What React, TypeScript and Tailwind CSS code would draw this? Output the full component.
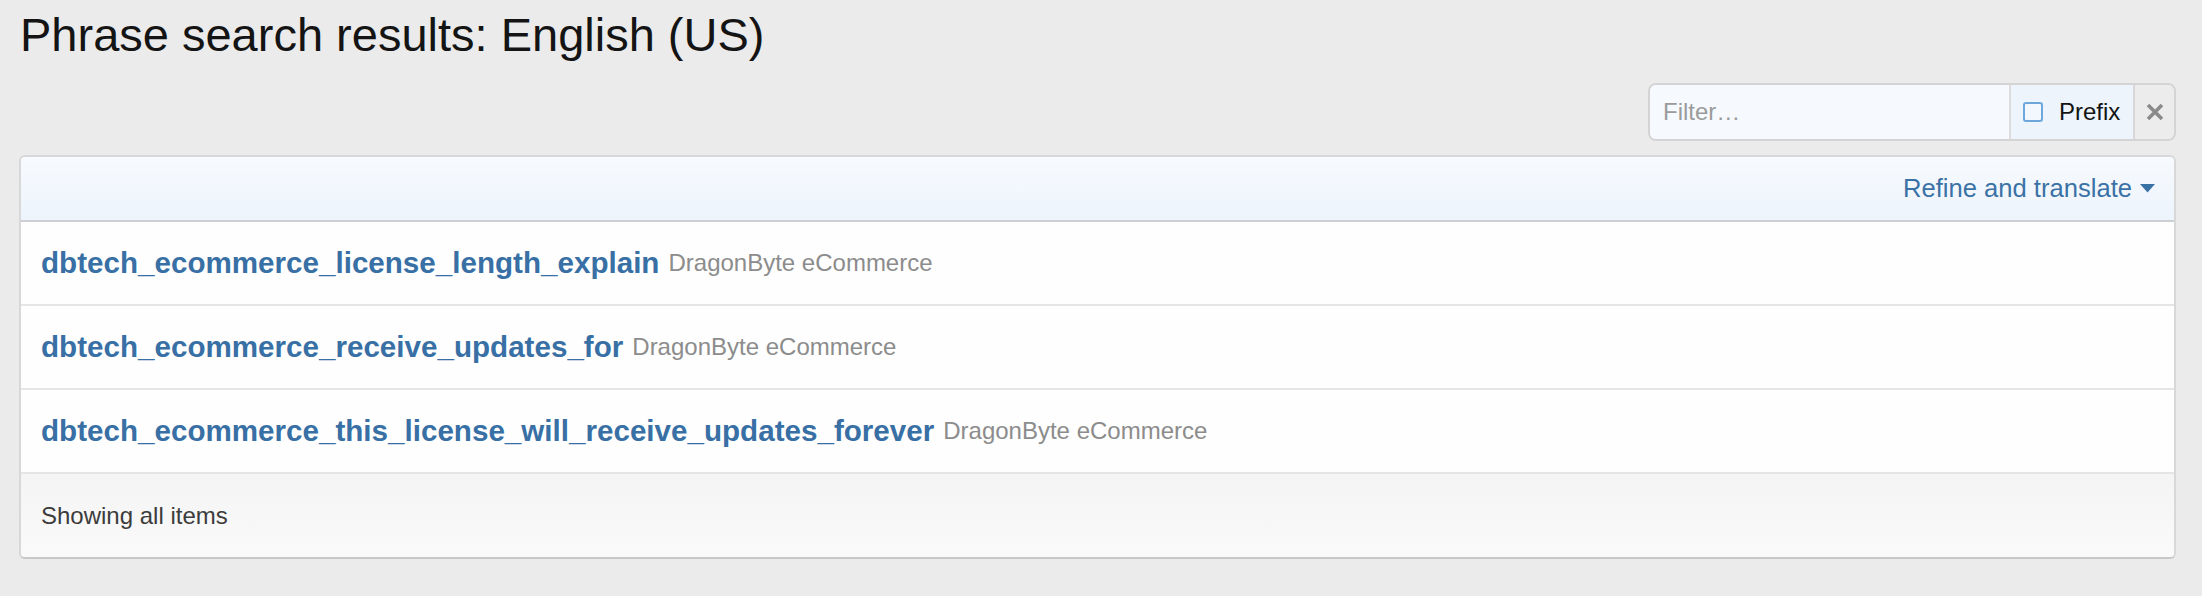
export default function App() {
  const rows = [
    "dbtech_ecommerce_license_length_explain",
    "dbtech_ecommerce_receive_updates_for",
    "dbtech_ecommerce_this_license_will_receive_updates_forever",
  ];
  return (
    <div className="min-h-screen w-full bg-[#ebebeb] pl-[19px] pr-[26px] font-['Liberation_Sans',Arial,sans-serif]">
      <h1 className="pt-[8px] pl-[1px] text-[47px] font-normal leading-[54px] text-[#141414]">
        Phrase search results: English (US)
      </h1>
      <div className="mt-[21px] flex justify-end">
        <div className="flex h-[58px] w-[528px] overflow-hidden rounded-[8px] border-2 border-[#d4d4d4]">
          <div className="flex w-[359px] items-center bg-[#f6fafe] pl-[13px] text-[24px] text-[#9b9b9b]">
            Filter…
          </div>
          <div className="flex w-[124px] items-center border-l-2 border-[#dcdcdc] bg-[#edf4fc] pl-[12px]">
            <span className="block h-[20px] w-[20px] rounded-[3px] border-2 border-[#6ea8da] bg-[#f2f8fe]" />
            <span className="ml-[16px] text-[24px] text-[#141414]">Prefix</span>
          </div>
          <div className="flex flex-1 items-center justify-center border-l-2 border-[#d8d8d8] bg-[#ececec]">
            <svg width="18" height="18" viewBox="0 0 18 18">
              <path d="M2 2 L16 16 M16 2 L2 16" stroke="#8a8a8a" strokeWidth="3.6" strokeLinecap="butt" />
            </svg>
          </div>
        </div>
      </div>
      <div className="mt-[14px] overflow-hidden rounded-[6px] border-2 border-[#d8d8d8] border-b-[#c8c8c8]">
        <div className="flex h-[65px] items-center justify-end border-b-2 border-[#ccd0d5] bg-gradient-to-b from-[#f7fafe] to-[#edf4fc] pr-[19px]">
          <span className="text-[25.6px] text-[#3b72a6]">Refine and translate</span>
          <svg className="ml-[8px]" width="15" height="9" viewBox="0 0 15 9">
            <path d="M0 0 L15 0 L7.5 8.5 Z" fill="#3b72a6" />
          </svg>
        </div>
        {rows.map((r) => (
          <div key={r} className="flex h-[84px] items-center border-b-2 border-[#e5e5e5] bg-[#fefefe] pl-[20px]">
            <span className="text-[29.6px] font-bold text-[#3870a5]">{r}</span>
            <span className="ml-[9px] text-[24px] text-[#8c8c8c]">DragonByte eCommerce</span>
          </div>
        ))}
        <div className="flex h-[83px] items-center bg-gradient-to-b from-[#f4f4f4] to-[#fafafa] pl-[20px] text-[24px] text-[#3c3c3c]">
          Showing all items
        </div>
      </div>
    </div>
  );
}
